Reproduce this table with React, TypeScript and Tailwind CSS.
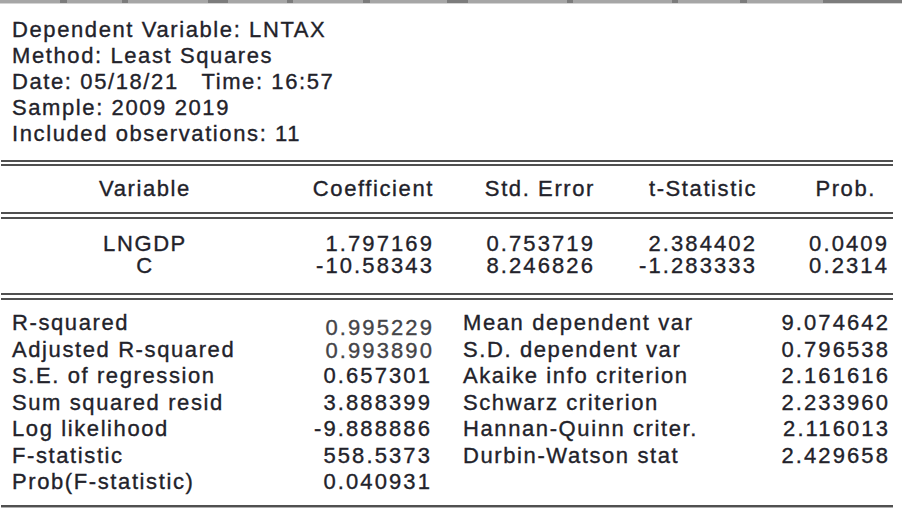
import React from "react";

const strip: [number, boolean][] = [
  [60, false], [7, true], [55, false], [6, true], [80, false], [20, true],
  [59, false], [6, true], [70, false], [7, true], [77, false], [21, true],
  [99, false], [6, true], [99, false], [6, true], [62, false], [7, true],
  [76, false], [79, true],
];

function DoubleLine({ gap = "h-[2px]" }: { gap?: string }) {
  return (
    <div className="ml-[1px] w-[892px] flex flex-col">
      <div className="h-[2px] bg-[#505050]" />
      <div className={gap} />
      <div className="h-[2px] bg-[#505050]" />
    </div>
  );
}

const coefs = [
  ["LNGDP", "1.797169", "0.753719", "2.384402", "0.0409"],
  ["C", "-10.58343", "8.246826", "-1.283333", "0.2314"],
];

const stats: { l: string; v: string; r?: string; rv?: string; vc?: string }[] = [
  { l: "R-squared", v: "0.995229", r: "Mean dependent var", rv: "9.074642", vc: "pt-[7px] text-[#444448] pr-0" },
  { l: "Adjusted R-squared", v: "0.993890", r: "S.D. dependent var", rv: "0.796538", vc: "pt-[3px] text-[#444448] pr-0" },
  { l: "S.E. of regression", v: "0.657301", r: "Akaike info criterion", rv: "2.161616" },
  { l: "Sum squared resid", v: "3.888399", r: "Schwarz criterion", rv: "2.233960" },
  { l: "Log likelihood", v: "-9.888886", r: "Hannan-Quinn criter.", rv: "2.116013" },
  { l: "F-statistic", v: "558.5373", r: "Durbin-Watson stat", rv: "2.429658" },
  { l: "Prob(F-statistic)", v: "0.040931" },
];

export default function App() {
  return (
    <div className="w-[902px] h-[512px] bg-white overflow-hidden text-[22px] text-[#22222a] [-webkit-text-stroke:0.35px_currentColor] font-['Liberation_Sans',Arial,sans-serif] flex flex-col">
      {/* top toolbar edge */}
      <div className="flex h-[3px]">
        {strip.map(([w, dark], i) => (
          <div
            key={i}
            className={dark ? "h-full bg-[#7c7c7c]" : "h-full bg-[#a6a6a6]"}
            style={{ width: w }}
          />
        ))}
      </div>
      <div className="h-[1px] bg-[#d4d4d4]" />

      {/* header info */}
      <div className="mt-[13px] pl-[12px] flex flex-col leading-[26px] tracking-[1.6px] whitespace-pre">
        <div>Dependent Variable: LNTAX</div>
        <div>Method: Least Squares</div>
        <div>Date: 05/18/21   Time: 16:57</div>
        <div>Sample: 2009 2019</div>
        <div>Included observations: 11</div>
      </div>

      <div className="mt-[13px]">
        <DoubleLine />
      </div>

      {/* coefficient header */}
      <div className="h-[46px] grid grid-cols-[290px_144px_161px_162px_132px] items-center leading-[26px] tracking-[1.6px]">
        <div className="text-center">Variable</div>
        <div className="text-right">Coefficient</div>
        <div className="text-right">Std. Error</div>
        <div className="text-right">t-Statistic</div>
        <div className="text-right pr-[13px]">Prob.</div>
      </div>

      <DoubleLine gap="h-[3px]" />

      {/* coefficients */}
      <div className="pt-[14px] flex flex-col leading-[22px]">
        {coefs.map((r) => (
          <div key={r[0]} className="grid grid-cols-[290px_144px_161px_162px_132px] h-[22px]">
            <div className="text-center tracking-[1.6px]">{r[0]}</div>
            <div className="text-right tracking-[2.1px]">{r[1]}</div>
            <div className="text-right tracking-[2.1px]">{r[2]}</div>
            <div className="text-right tracking-[2.1px]">{r[3]}</div>
            <div className="text-right tracking-[2.1px]">{r[4]}</div>
          </div>
        ))}
      </div>

      <div className="mt-[16px]">
        <DoubleLine gap="h-[3px]" />
      </div>

      {/* statistics */}
      <div className="mt-[10px] flex flex-col leading-[26.5px]">
        {stats.map((s) => (
          <div key={s.l} className="flex h-[26.5px]">
            <div className="w-[434px] pl-[12px] flex justify-between items-start">
              <span className="tracking-[1.6px]">{s.l}</span>
              <span className={"tracking-[2.1px] leading-[22px] pt-[2px] " + (s.vc ?? "pr-[2px]")}>{s.v}</span>
            </div>
            {s.r && (
              <div className="w-[456px] pl-[29px] flex justify-between items-start">
                <span className="tracking-[1.6px]">{s.r}</span>
                <span className="tracking-[2.1px] leading-[22px] pt-[2px]">{s.rv}</span>
              </div>
            )}
          </div>
        ))}
      </div>

      <div className="mt-[9px] ml-[1px] w-[892px] h-[2px] bg-[#505050]" />
      <div className="ml-[1px] w-[892px] h-[1px] bg-[#b0b0b0]" />
    </div>
  );
}
